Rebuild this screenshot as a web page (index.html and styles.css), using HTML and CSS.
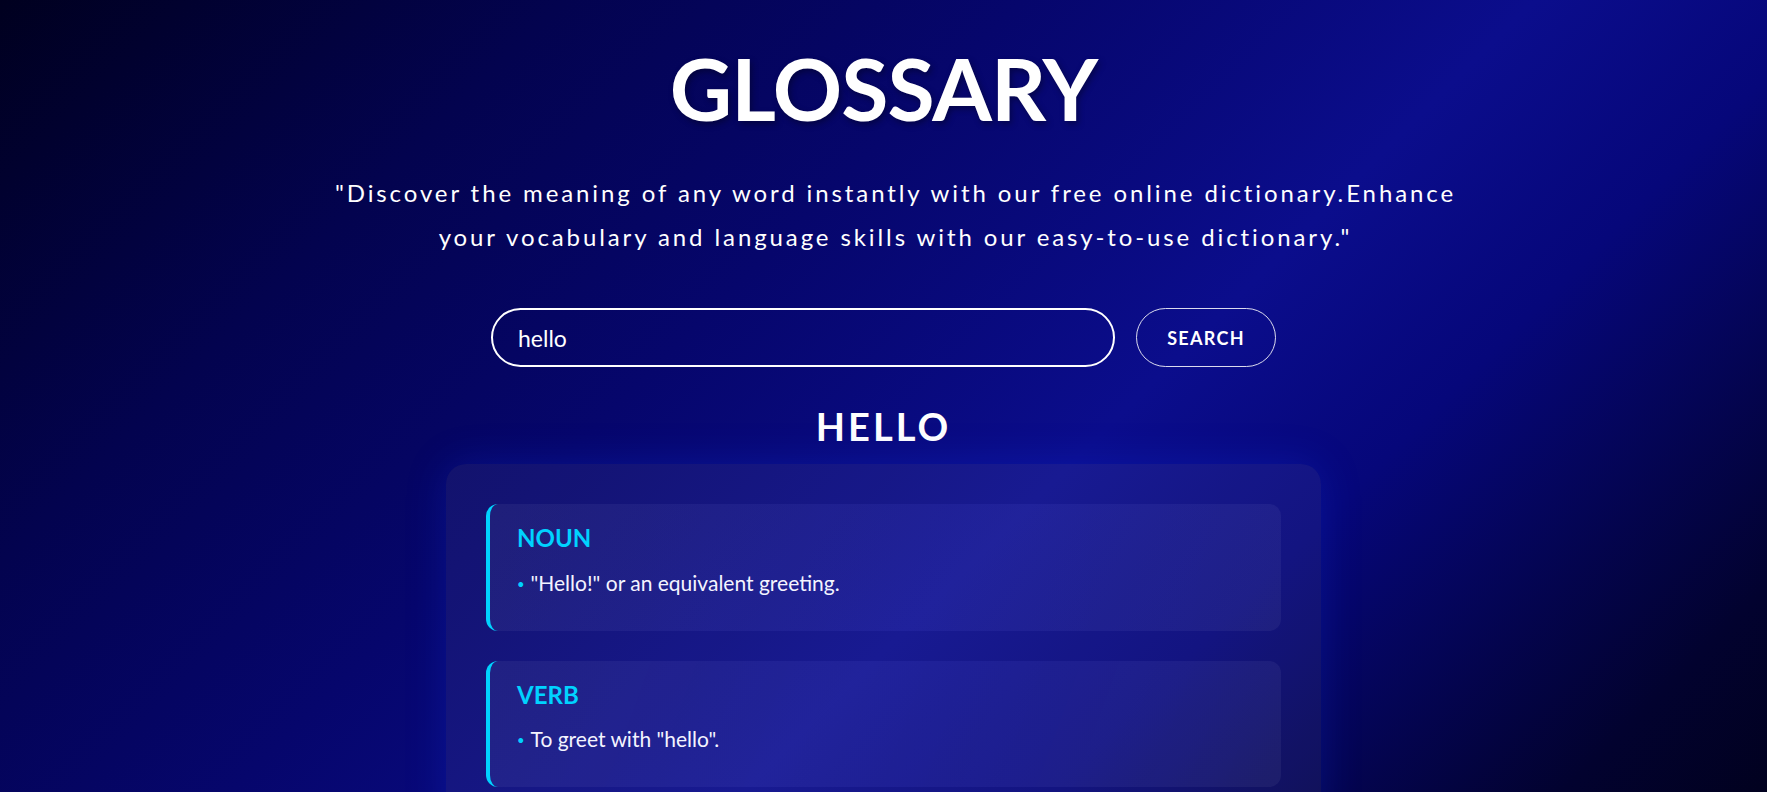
FILE: index.html
```html
<!DOCTYPE html>
<html lang="en">
<head>
<meta charset="UTF-8">
<title>Glossary</title>
<link rel="stylesheet" href="styles.css">
</head>
<body>
<main class="page">
  <h1 class="title">GLOSSARY</h1>
  <p class="subtitle">"Discover the meaning of any word instantly with our free online dictionary.Enhance your vocabulary and language skills with our easy-to-use dictionary."</p>
  <form class="search">
    <input class="search-input" type="text" value="hello">
    <button class="search-btn" type="button">SEARCH</button>
  </form>
  <h2 class="word">HELLO</h2>
  <section class="results">
    <article class="meaning">
      <h3 class="pos">NOUN</h3>
      <ul class="defs">
        <li>"Hello!" or an equivalent greeting.</li>
      </ul>
    </article>
    <article class="meaning">
      <h3 class="pos">VERB</h3>
      <ul class="defs">
        <li>To greet with "hello".</li>
      </ul>
    </article>
  </section>
</main>
</body>
</html>
```

FILE: styles.css
```css
* { box-sizing: border-box; }

html, body {
  margin: 0;
  padding: 0;
}

body {
  min-height: 100vh;
  font-family: "Lato", "Noto Sans", sans-serif;
  color: #ffffff;
  background: linear-gradient(135deg,
    #00001f 0%,
    #03034f 22%,
    #06066c 40%,
    #0b0d8c 60%,
    #06077a 72%,
    #02022f 92%,
    #01011f 100%);
  background-attachment: fixed;
}

.page {
  display: flex;
  flex-direction: column;
  align-items: center;
  padding: 36px 20px 40px;
}

.title {
  margin: 0;
  font-size: 86px;
  font-weight: 700;
  line-height: 1.2;
  letter-spacing: -1px;
  text-shadow: 2px 3px 6px rgba(0, 0, 0, 0.35);
}

.subtitle {
  margin: 32px 0 0;
  max-width: 1174px;
  padding-left: 24px;
  text-align: center;
  font-size: 24px;
  line-height: 44px;
  letter-spacing: 2.9px;
  color: #ffffff;
}

.search {
  display: flex;
  gap: 21px;
  margin-top: 49px;
}

.search-input {
  width: 624px;
  height: 59px;
  padding: 0 25px;
  border: 2px solid #ffffff;
  border-radius: 30px;
  background: transparent;
  color: #ffffff;
  font-family: "Lato", sans-serif;
  font-size: 23px;
  outline: none;
}

.search-btn {
  width: 140px;
  height: 59px;
  border: 1px solid rgba(255, 255, 255, 0.85);
  border-radius: 30px;
  background: transparent;
  color: #ffffff;
  font-family: "Lato", sans-serif;
  font-size: 18px;
  font-weight: 700;
  letter-spacing: 1.3px;
}

.word {
  margin: 37px 0 0;
  font-size: 38px;
  font-weight: 700;
  line-height: 1.2;
  letter-spacing: 3px;
}

.results {
  width: 875px;
  margin-top: 14px;
  padding: 40px;
  border-radius: 20px;
  background: rgba(255, 255, 255, 0.055);
  box-shadow: 0 0 40px rgba(20, 60, 255, 0.22);
  display: flex;
  flex-direction: column;
  gap: 30px;
}

.meaning {
  padding: 20px 27px 24px;
  border-left: 4px solid #00d2ff;
  border-radius: 12px;
  background: linear-gradient(110deg,
    rgba(255, 255, 255, 0.05) 0%,
    rgba(110, 110, 255, 0.09) 55%,
    rgba(255, 255, 255, 0.05) 100%);
}

.pos {
  margin: 0 0 15px;
  font-size: 24px;
  font-weight: 700;
  line-height: 1.2;
  color: #00d2ff;
}

.defs {
  margin: 0;
  padding: 0;
  list-style: none;
}

.defs li {
  margin-bottom: 8px;
  font-size: 21px;
  line-height: 29px;
  color: #f4f4ff;
}

.defs li::before {
  content: "•";
  color: #00d2ff;
  font-size: 13px;
  margin-right: 6px;
  vertical-align: 2px;
}
```
